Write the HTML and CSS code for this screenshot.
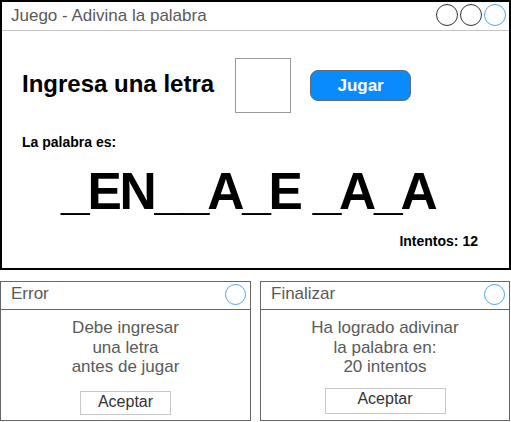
FILE: index.html
```html
<!DOCTYPE html>
<html lang="es">
<head>
<meta charset="utf-8">
<title>Juego - Adivina la palabra</title>
<link rel="stylesheet" href="styles.css">
</head>
<body>
<div class="window">
  <div class="titlebar">
    <span class="title">Juego - Adivina la palabra</span>
    <div class="controls">
      <span class="circle"></span>
      <span class="circle"></span>
      <span class="circle circle-blue"></span>
    </div>
  </div>
  <div class="content">
    <div class="input-row">
      <span class="prompt">Ingresa una letra</span>
      <div class="letter-box"></div>
      <button class="play-btn">Jugar</button>
    </div>
    <div class="label">La palabra es:</div>
    <div class="word">_EN__A_E _A_A</div>
    <div class="attempts">Intentos: 12</div>
  </div>
</div>
<div class="dialogs">
  <div class="dialog dialog-error">
    <div class="dialog-title">
      <span class="dialog-name">Error</span>
      <span class="circle circle-blue circle-sm"></span>
    </div>
    <div class="dialog-body">
      <p class="message">Debe ingresar<br>una letra<br>antes de jugar</p>
      <button class="ok-btn ok-error">Aceptar</button>
    </div>
  </div>
  <div class="dialog dialog-finish">
    <div class="dialog-title">
      <span class="dialog-name">Finalizar</span>
      <span class="circle circle-blue circle-sm"></span>
    </div>
    <div class="dialog-body">
      <p class="message">Ha logrado adivinar<br>la palabra en:<br>20 intentos</p>
      <button class="ok-btn ok-finish">Aceptar</button>
    </div>
  </div>
</div>
</body>
</html>
```

FILE: styles.css
```css
* { box-sizing: border-box; }
html, body {
  margin: 0;
  padding: 0;
  background: #fff;
  width: 511px;
  height: 422px;
  overflow: hidden;
  font-family: "Liberation Sans", Arial, sans-serif;
}
.window {
  width: 511px;
  height: 270px;
  border: 2px solid #000;
}
.titlebar {
  height: 29px;
  border-bottom: 1px solid #c4c4c4;
  display: flex;
  align-items: center;
  justify-content: space-between;
  padding: 0 3px 0 9px;
}
.title {
  font-size: 17px;
  line-height: 28px;
  color: #5a5a5a;
}
.controls {
  display: flex;
  gap: 2px;
  margin-bottom: 2px;
}
.circle {
  display: block;
  width: 22px;
  height: 22px;
  border: 1px solid #333;
  border-radius: 50%;
}
.circle-blue { border-color: #4ea5f5; }
.circle-sm {
  width: 21px;
  height: 21px;
  margin-bottom: 2px;
}
.content {
  padding: 27px 31px 0 20px;
}
.input-row {
  display: flex;
  align-items: center;
}
.prompt {
  font-size: 24px;
  font-weight: bold;
  color: #000;
  margin-bottom: 4px;
}
.letter-box {
  width: 56px;
  height: 55px;
  border: 1px solid #999;
  margin-left: 21px;
}
.play-btn {
  width: 101px;
  height: 31px;
  margin-left: 19px;
  padding: 0;
  background: #0a8bfd;
  border: 1px solid #5f6a75;
  border-radius: 8px;
  color: #fff;
  font-family: "Liberation Sans", Arial, sans-serif;
  font-size: 17px;
  font-weight: bold;
}
.label {
  margin-top: 21px;
  font-size: 14px;
  font-weight: bold;
  color: #000;
}
.word {
  margin-top: 16px;
  margin-left: 39px;
  font-size: 51.5px;
  line-height: 51.5px;
  font-weight: bold;
  letter-spacing: -2.25px;
  color: #000;
  white-space: pre;
}
.attempts {
  margin-top: 15px;
  text-align: right;
  font-size: 14px;
  font-weight: bold;
  color: #000;
}
.dialogs {
  display: flex;
  gap: 9px;
  margin-top: 11px;
}
.dialog {
  height: 140px;
  border: 1px solid #666;
  display: flex;
  flex-direction: column;
}
.dialog-error { width: 251px; }
.dialog-finish { width: 250px; }
.dialog-title {
  height: 28px;
  border-bottom: 1px solid #666;
  display: flex;
  align-items: center;
  justify-content: space-between;
  padding: 0 4px 0 10px;
}
.dialog-name {
  font-size: 17px;
  line-height: 23px;
  margin-bottom: 4px;
  color: #5a5a5a;
}
.dialog-body {
  display: flex;
  flex-direction: column;
  align-items: center;
  padding-top: 8px;
}
.message {
  margin: 0;
  font-size: 17px;
  line-height: 19.5px;
  color: #5a5a5a;
  text-align: center;
}
.ok-btn {
  padding: 0;
  background: #fff;
  border: 1px solid #c8c8c8;
  color: #333;
  font-family: "Liberation Sans", Arial, sans-serif;
  font-size: 16px;
  line-height: 20px;
}
.ok-error {
  width: 91px;
  height: 24px;
  margin-top: 14px;
  padding-bottom: 2px;
}
.ok-finish {
  width: 121px;
  height: 26px;
  margin-top: 11px;
  padding-bottom: 4px;
}
```
